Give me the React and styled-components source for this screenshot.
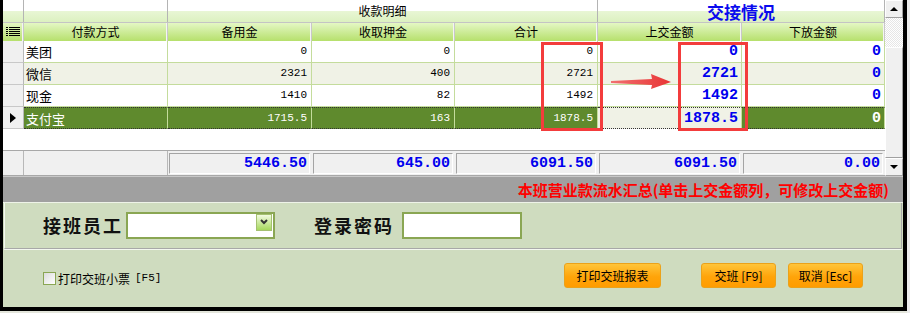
import React from 'react'
import styled, { createGlobalStyle } from 'styled-components'

const GlobalStyle = createGlobalStyle`
  html, body { margin: 0; padding: 0; background: #ececec; }
  body { font-family: "Noto Sans CJK SC", "Noto Sans", sans-serif; }
  * { box-sizing: border-box; }
`

const COLS = '21px 144px 144px 143px 143px 144px 143px'
const CJK = '"Noto Sans CJK SC", "Noto Sans", sans-serif'
const MONO = '"Liberation Mono", "DejaVu Sans Mono", monospace'

const Window = styled.div`
  position: relative;
  width: 907px;
  height: 311px;
  border-left: 3px solid #000;
  border-right: 4px solid #000;
  border-bottom: 4px solid #000;
  display: flex;
  flex-direction: column;
  background: #cfdcbf;
`

const GridArea = styled.div`
  display: flex;
  height: 176px;
  background: #fff;
`

const Table = styled.div`
  width: 882px;
  display: flex;
  flex-direction: column;
`

const GroupRow = styled.div`
  display: grid;
  grid-template-columns: 21px 144px 430px 287px;
  height: 23px;
  background: linear-gradient(to bottom, #ffffff 0, #ffffff 50%, #e8f6d4 52%, #dcf1c0 100%);
  border-bottom: 1px solid #c4c4c4;
`

const GroupCell = styled.div`
  border-right: 1px solid #b4b4b4;
  display: flex;
  align-items: center;
  justify-content: center;
  font-family: ${CJK};
  font-size: ${p => (p.$accent ? '17px' : '12px')};
  font-weight: ${p => (p.$accent ? 700 : 400)};
  color: ${p => (p.$accent ? '#0a0aee' : '#000')};
  line-height: 1;
`

const HeadRow = styled.div`
  display: grid;
  grid-template-columns: ${COLS};
  height: 18px;
  background: linear-gradient(to bottom, #e4f7c4, #b6e06c);
`

const HeadCell = styled.div`
  border-right: 1px solid #c8c8c8;
  box-shadow: inset -1px 0 0 #f4f4f4;
  display: flex;
  align-items: center;
  justify-content: center;
  font-family: ${CJK};
  font-size: 12px;
  line-height: 1;
  color: #000;
`

const Row = styled.div`
  display: grid;
  grid-template-columns: ${COLS};
  height: 22px;
  background: ${p => (p.$selected ? '#5f8a2d' : p.$alt ? '#f0f2e6' : '#fff')};
  color: ${p => (p.$selected ? '#fff' : '#000')};
`

const Indicator = styled.div`
  background: #f0f0f0;
  border-right: 1px solid #b8b8b8;
  border-bottom: 1px solid #c8c8c8;
  display: flex;
  align-items: center;
  justify-content: center;
`

const Cell = styled.div`
  border-right: 1px solid #c4dc9c;
  border-bottom: 1px ${p => (p.$focus ? 'dotted #333' : 'solid #c4dc9c')};
  border-top: ${p => (p.$focus ? '1px dotted #333' : '0')};
  display: flex;
  align-items: center;
  justify-content: ${p => (p.$text ? 'flex-start' : 'flex-end')};
  padding: ${p => (p.$text ? '0 2px' : '0 4px 0 0')};
  background: ${p => p.$bg || 'transparent'};
  font-family: ${p => (p.$text ? CJK : MONO)};
  font-size: ${p => (p.$text ? '13px' : '11px')};
  line-height: 1;
`

const BigNum = styled.span`
  font-family: ${MONO};
  font-size: 15px;
  font-weight: 700;
  color: ${p => (p.$light ? '#fff' : '#0000ee')};
  margin-right: -1px;
`

const Filler = styled.div`
  height: 21px;
  background: #fff;
`

const TotalRow = styled.div`
  display: grid;
  grid-template-columns: ${COLS};
  height: 26px;
  background: #f0f0f0;
  border-top: 1px solid #a8a8a8;
  border-bottom: 1px solid #a8a8a8;
`

const TotalBlank = styled.div`
  border-right: 1px solid #b8b8b8;
`

const TotalCell = styled.div`
  margin: 2px 2px 1px 1px;
  border: 1px solid;
  border-color: #a4a4a4 #ffffff #ffffff #a4a4a4;
  display: flex;
  align-items: center;
  justify-content: flex-end;
  padding-right: 2px;
  font-family: ${MONO};
  font-size: 15px;
  font-weight: 700;
  color: #0000ee;
`

const ScrollBar = styled.div`
  width: 18px;
  display: flex;
  flex-direction: column;
  background: #f0f0f0;
`

const ScrollBtn = styled.div`
  height: 18px;
  display: flex;
  align-items: center;
  justify-content: center;
  background: #f0f0f0;
  border: 1px solid;
  border-color: #fff #a0a0a0 #a0a0a0 #fff;
`

const Track = styled.div`
  height: 29px;
  background: repeating-conic-gradient(#e6e6e6 0 25%, #ffffff 0 50%) 0 0 / 2px 2px;
`

const Thumb = styled.div`
  flex: 1;
  background: #f0f0f0;
  border: 1px solid;
  border-color: #ffffff #a0a0a0 #a0a0a0 #ffffff;
`

const SummaryBar = styled.div`
  height: 27px;
  background: #a0a0a0;
  border-top: 1px solid #c8c8c8;
  border-bottom: 1px solid #eef3e8;
  display: flex;
  align-items: center;
  justify-content: flex-end;
  padding-right: 14px;
  font-family: ${CJK};
  font-size: 15px;
  font-weight: 700;
  color: #ff0000;
`

const GroupBox = styled.div`
  height: 46px;
  margin-left: 1px;
  margin-right: 1px;
  border-left: 1px solid #f4f8f0;
  border-right: 1px solid #a8a8a8;
  border-bottom: 1px solid #a8a8a8;
  box-shadow: 0 1px 0 #f4f8f0;
  display: flex;
  align-items: center;
  padding: 0 0 1px 38px;
`

const FieldLabel = styled.span`
  font-family: ${CJK};
  font-size: 18px;
  font-weight: 700;
  color: #111;
  letter-spacing: 2px;
  margin-right: ${p => p.$gap}px;
  margin-left: ${p => p.$lead || 0}px;
`

const Field = styled.div`
  width: ${p => p.$w}px;
  height: 27px;
  background: #fff;
  border: 2px solid #8aa653;
  display: flex;
  justify-content: flex-end;
  padding: 0 1px;
`

const DropBtn = styled.div`
  width: 16px;
  height: 17px;
  border: 1px solid #a4c070;
  background: linear-gradient(to bottom, #f2fbe0, #a6d85c);
  display: flex;
  align-items: center;
  justify-content: center;
`

const ActionRow = styled.div`
  flex: 1;
  display: flex;
  align-items: center;
  padding: 0 40px 5px 40px;
`

const CheckLabel = styled.label`
  display: flex;
  align-items: center;
  font-family: ${CJK};
  font-size: 12px;
  color: #000;
  margin-top: 5px;
`

const CheckBox = styled.span`
  width: 13px;
  height: 13px;
  border: 1px solid #8aa653;
  background: linear-gradient(135deg, #dcdcdc, #ffffff);
  margin-right: 2px;
`

const Keys = styled.span`
  font-family: ${MONO};
  font-size: 11px;
  margin-left: 5px;
`

const Buttons = styled.div`
  margin-left: auto;
  display: flex;
  gap: 12px;
`

const OrangeButton = styled.button`
  width: ${p => p.$w}px;
  height: 25px;
  margin-right: ${p => p.$after || 0}px;
  border: 1px solid #eba21a;
  border-radius: 3px;
  background: linear-gradient(to bottom, #ffc53a, #ffa40a 55%, #ff9c00);
  font-family: ${CJK};
  font-size: 12px;
  color: #000;
  padding: 0;
  display: flex;
  align-items: center;
  justify-content: center;
`

const BottomStrip = styled.div`
  height: 2px;
  width: 907px;
  background: #e4e6dc;
`

const RedBox = styled.div`
  position: absolute;
  left: ${p => p.$x}px;
  top: ${p => p.$y}px;
  width: ${p => p.$w}px;
  height: ${p => p.$h}px;
  border: 3px solid #f33c3c;
  pointer-events: none;
`

const Arrow = styled.svg`
  position: absolute;
  left: 608px;
  top: 74px;
`

const rows = [
  { name: '美团', a: '0', b: '0', sum: '0', up: '0', down: '0' },
  { name: '微信', a: '2321', b: '400', sum: '2721', up: '2721', down: '0', alt: true },
  { name: '现金', a: '1410', b: '82', sum: '1492', up: '1492', down: '0' },
  { name: '支付宝', a: '1715.5', b: '163', sum: '1878.5', up: '1878.5', down: '0', selected: true },
]

const totals = ['5446.50', '645.00', '6091.50', '6091.50', '0.00']

const MenuIcon = () => (
  <svg width="14" height="10" viewBox="0 0 14 10">
    {[0, 2, 4, 6, 8].map(y => (
      <g key={y}>
        <rect x="0" y={y} width="2" height="1" fill="#000" />
        <rect x="3" y={y} width="11" height="1" fill="#000" />
      </g>
    ))}
  </svg>
)

const Pointer = () => (
  <svg width="6" height="10" viewBox="0 0 6 10">
    <polygon points="0,0 6,5 0,10" fill="#000" />
  </svg>
)

const Tri = ({ down }) => (
  <svg width="8" height="4" viewBox="0 0 8 4">
    <polygon points={down ? '0,0 8,0 4,4' : '0,4 8,4 4,0'} fill="#000" />
  </svg>
)

const Chevron = () => (
  <svg width="8" height="6" viewBox="0 0 8 6">
    <path d="M1 1 L4 4 L7 1" stroke="#333" strokeWidth="2" fill="none" />
  </svg>
)

export default function App() {
  return (
    <>
      <GlobalStyle />
      <Window>
        <GridArea>
          <Table>
            <GroupRow>
              <GroupCell />
              <GroupCell />
              <GroupCell>收款明细</GroupCell>
              <GroupCell $accent>交接情况</GroupCell>
            </GroupRow>
            <HeadRow>
              <HeadCell><MenuIcon /></HeadCell>
              <HeadCell>付款方式</HeadCell>
              <HeadCell>备用金</HeadCell>
              <HeadCell>收取押金</HeadCell>
              <HeadCell>合计</HeadCell>
              <HeadCell>上交金额</HeadCell>
              <HeadCell>下放金额</HeadCell>
            </HeadRow>
            {rows.map(r => (
              <Row key={r.name} $alt={r.alt} $selected={r.selected}>
                <Indicator>{r.selected && <Pointer />}</Indicator>
                <Cell $text $focus={r.selected}>{r.name}</Cell>
                <Cell $focus={r.selected}>{r.a}</Cell>
                <Cell $focus={r.selected}>{r.b}</Cell>
                <Cell $focus={r.selected}>{r.sum}</Cell>
                <Cell $focus={r.selected} $bg={r.selected ? '#f0f2e6' : null}>
                  <BigNum>{r.up}</BigNum>
                </Cell>
                <Cell $focus={r.selected}>
                  <BigNum $light={r.selected}>{r.down}</BigNum>
                </Cell>
              </Row>
            ))}
            <Filler />
            <TotalRow>
              <TotalBlank />
              <TotalBlank />
              {totals.map((t, i) => (
                <TotalCell key={i}>{t}</TotalCell>
              ))}
            </TotalRow>
          </Table>
          <ScrollBar>
            <ScrollBtn><Tri /></ScrollBtn>
            <Track />
            <Thumb />
            <ScrollBtn><Tri down /></ScrollBtn>
          </ScrollBar>
        </GridArea>

        <SummaryBar>本班营业款流水汇总(单击上交金额列，可修改上交金额)</SummaryBar>

        <GroupBox>
          <FieldLabel $gap={3}>接班员工</FieldLabel>
          <Field $w={149}>
            <DropBtn><Chevron /></DropBtn>
          </Field>
          <FieldLabel $lead={39} $gap={8}>登录密码</FieldLabel>
          <Field $w={120} />
        </GroupBox>

        <ActionRow>
          <CheckLabel>
            <CheckBox />
            打印交班小票<Keys>[F5]</Keys>
          </CheckLabel>
          <Buttons>
            <OrangeButton $w={97} $after={28}>打印交班报表</OrangeButton>
            <OrangeButton $w={75}>交班 [F9]</OrangeButton>
            <OrangeButton $w={75}>取消 [Esc]</OrangeButton>
          </Buttons>
        </ActionRow>

        <RedBox $x={538} $y={42} $w={62} $h={89} />
        <RedBox $x={675} $y={42} $w={70} $h={89} />
        <Arrow width="60" height="16" viewBox="0 0 60 16">
          <defs>
            <linearGradient id="arrowFill" x1="0" x2="1" y1="0" y2="0">
              <stop offset="0" stopColor="#f27070" />
              <stop offset="1" stopColor="#e83434" />
            </linearGradient>
          </defs>
          <polygon points="0,7 41,5 40,0 60,8 40,15 41,11 0,9" fill="url(#arrowFill)" />
        </Arrow>
      </Window>
      <BottomStrip />
    </>
  )
}
